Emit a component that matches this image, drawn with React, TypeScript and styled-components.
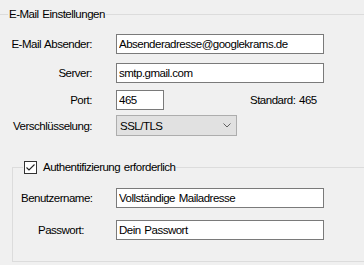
import React from 'react';
import styled, { createGlobalStyle } from 'styled-components';

const Global = createGlobalStyle`
  html, body { margin: 0; padding: 0; background: #f0f0f0; }
  body { font-family: "Liberation Sans", Arial, sans-serif; }
`;

const Window = styled.div`
  width: 364px;
  height: 265px;
  overflow: hidden;
  box-sizing: border-box;
  padding-top: 14px;
  background: #f0f0f0;
  font-family: "Liberation Sans", Arial, sans-serif;
  font-size: 11.5px;
  letter-spacing: -0.5px;
  word-spacing: 1px;
  color: #000;
`;

const GroupBox = styled.div<{ $left: number; $top?: number; $padTop: number; $padBottom: number }>`
  position: relative;
  margin-left: ${p => p.$left}px;
  margin-top: ${p => p.$top ?? 0}px;
  width: 420px;
  border: 1px solid #dcdcdc;
  padding-top: ${p => p.$padTop}px;
  padding-bottom: ${p => p.$padBottom}px;
`;

const Legend = styled.div<{ $left: number }>`
  position: absolute;
  top: -9px;
  left: ${p => p.$left}px;
  height: 16px;
  display: flex;
  align-items: center;
  padding: 0 1px;
  background: #f0f0f0;
  white-space: nowrap;
`;

const Row = styled.div<{ $top: number; $h?: number }>`
  display: flex;
  align-items: center;
  height: ${p => p.$h ?? 20}px;
  margin-top: ${p => p.$top}px;
`;

const Label = styled.div<{ $width: number; $align: 'left' | 'right'; $pad?: number }>`
  box-sizing: border-box;
  width: ${p => p.$width}px;
  padding-left: ${p => p.$pad ?? 0}px;
  text-align: ${p => p.$align};
  white-space: nowrap;
`;

const Gap = styled.div<{ $w: number }>`
  width: ${p => p.$w}px;
  flex: none;
`;

const TextBox = styled.input<{ $width: number }>`
  box-sizing: border-box;
  width: ${p => p.$width}px;
  height: 20px;
  margin: 0;
  padding: 0 2px;
  border: 1px solid #7a7a7a;
  background: #fff;
  font: inherit;
  letter-spacing: inherit;
  word-spacing: inherit;
  color: #000;
  outline: none;
`;

const Hint = styled.div<{ $left: number }>`
  margin-left: ${p => p.$left}px;
  white-space: nowrap;
`;

const Combo = styled.div`
  box-sizing: border-box;
  width: 121px;
  height: 21px;
  display: flex;
  align-items: center;
  justify-content: space-between;
  padding: 0 5px 0 3px;
  border: 1px solid #adadad;
  background: #e1e1e1;
`;

const Check = styled.div`
  box-sizing: border-box;
  width: 13px;
  height: 13px;
  border: 1px solid #333;
  background: #fff;
  display: flex;
  align-items: center;
  justify-content: center;
`;

const CheckText = styled.span`
  margin-left: 6px;
`;

export default function App() {
  return (
    <>
      <Global />
      <Window>
        <GroupBox $left={-1} $padTop={19} $padBottom={40}>
          <Legend $left={8}>E-Mail Einstellungen</Legend>
          <Row $top={0}>
            <Label $width={92} $align="right">E-Mail Absender:</Label>
            <Gap $w={24} />
            <TextBox $width={208} readOnly value="Absenderadresse@googlekrams.de" />
          </Row>
          <Row $top={9}>
            <Label $width={92} $align="right">Server:</Label>
            <Gap $w={24} />
            <TextBox $width={208} readOnly value="smtp.gmail.com" />
          </Row>
          <Row $top={7}>
            <Label $width={92} $align="right">Port:</Label>
            <Gap $w={24} />
            <TextBox $width={48} readOnly value="465" />
            <Hint $left={86}>Standard: 465</Hint>
          </Row>
          <Row $top={5} $h={21}>
            <Label $width={92} $align="right">Verschlüsselung:</Label>
            <Gap $w={24} />
            <Combo>
              <span>SSL/TLS</span>
              <svg width="8" height="5" viewBox="0 0 8 5">
                <path d="M0.5 0.5 L4 4 L7.5 0.5" fill="none" stroke="#606060" strokeWidth="1" />
              </svg>
            </Combo>
          </Row>
          <GroupBox $left={12} $top={31} $padTop={20} $padBottom={21}>
            <Legend $left={10}>
              <Check>
                <svg width="11" height="11" viewBox="0 0 11 11">
                  <path d="M1.5 5.5 L4 8 L9.5 2.5" fill="none" stroke="#222" strokeWidth="1.1" />
                </svg>
              </Check>
              <CheckText>Authentifizierung erforderlich</CheckText>
            </Legend>
            <Row $top={0}>
              <Label $width={103} $align="left" $pad={8}>Benutzername:</Label>
              <TextBox $width={208} readOnly value="Vollständige Mailadresse" />
            </Row>
            <Row $top={12}>
              <Label $width={103} $align="left" $pad={25}>Passwort:</Label>
              <TextBox $width={208} readOnly value="Dein Passwort" />
            </Row>
          </GroupBox>
        </GroupBox>
      </Window>
    </>
  );
}
